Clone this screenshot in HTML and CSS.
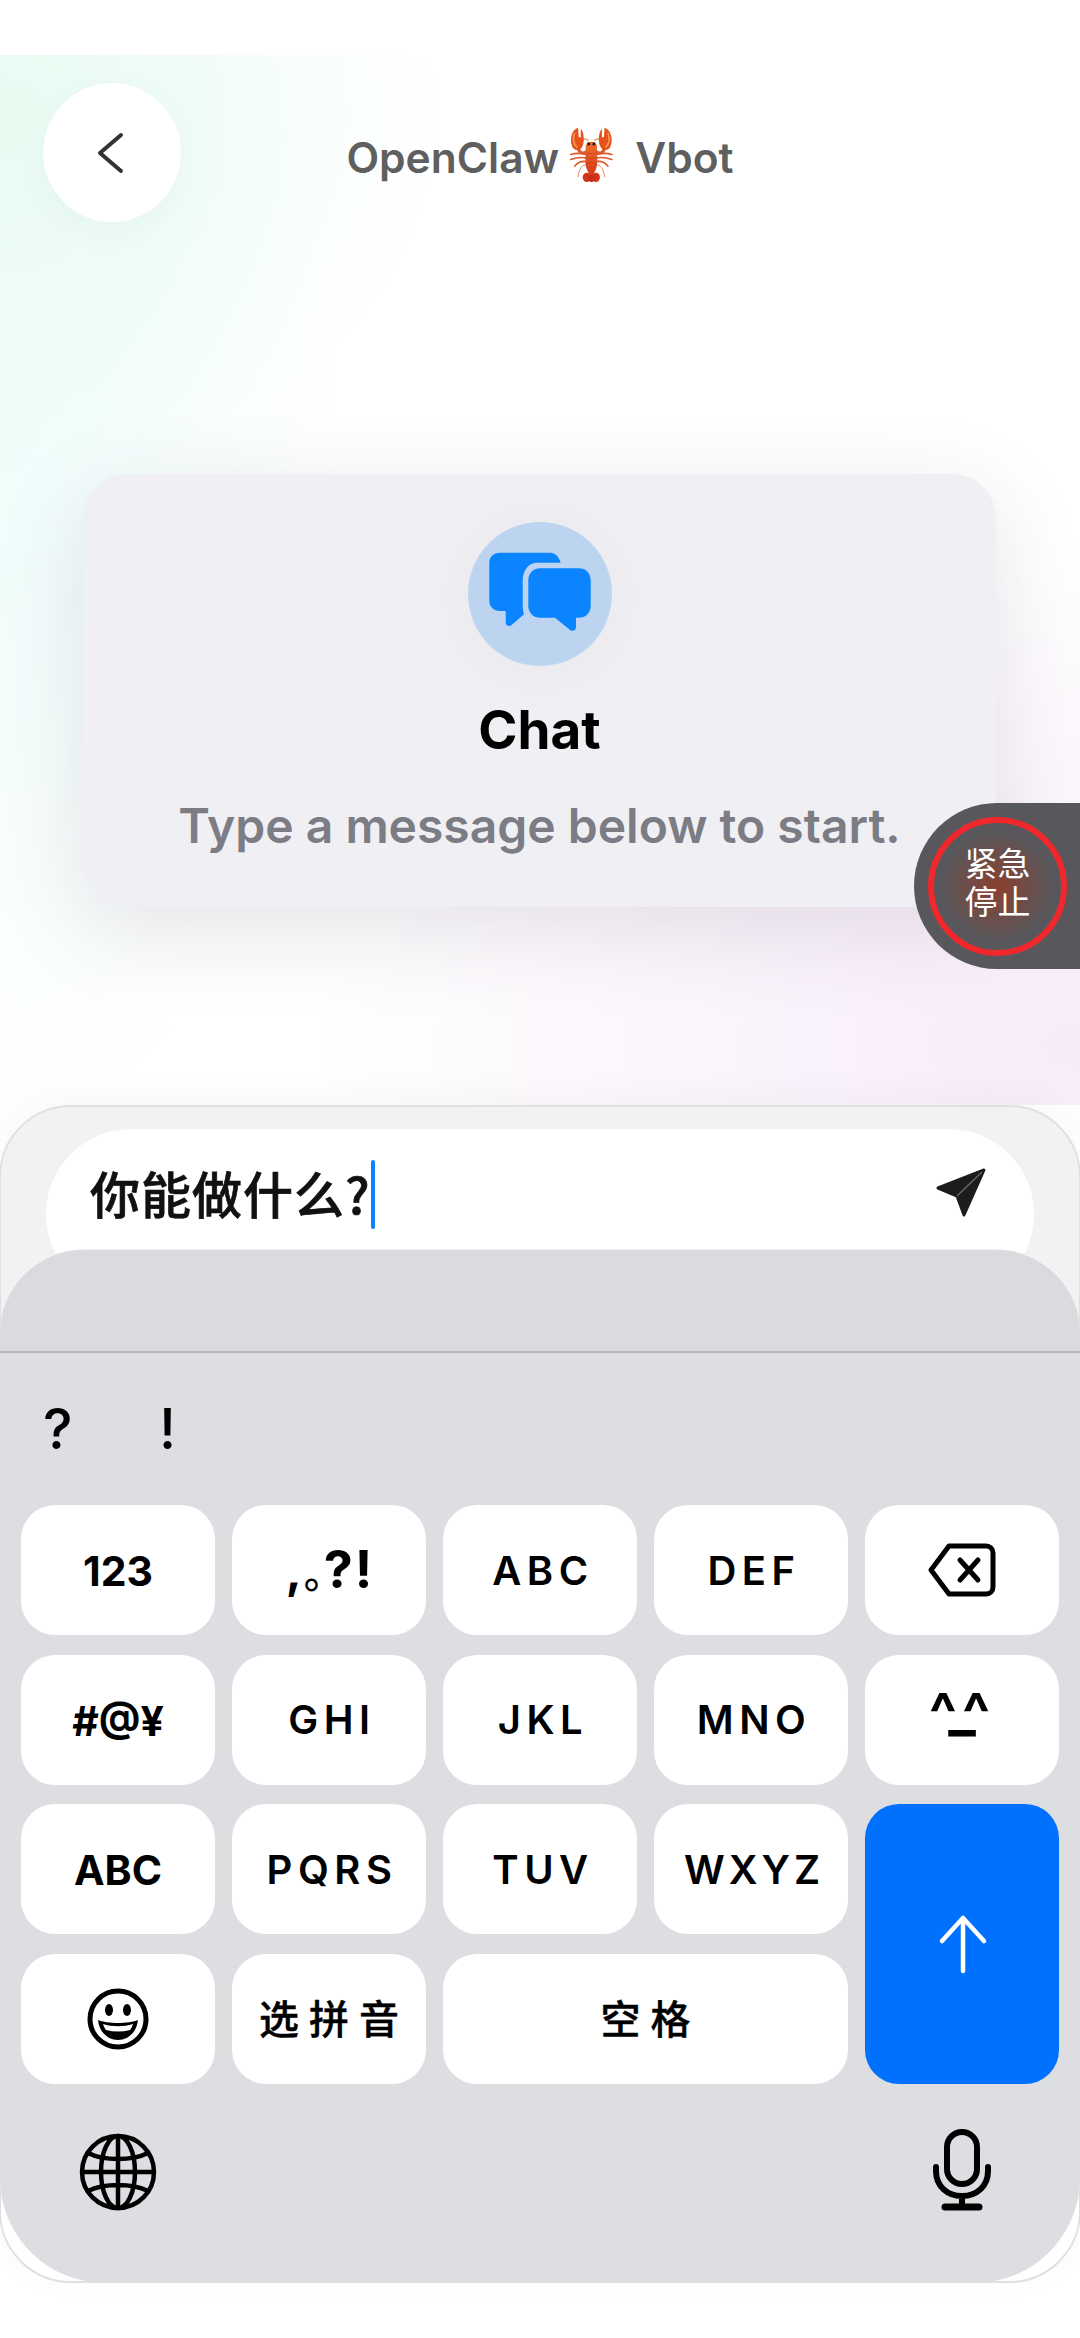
FILE: index.html
```html
<!doctype html>
<html lang="zh">
<head>
    <meta charset="UTF-8">
    <meta name="viewport" content="width=device-width, initial-scale=1.0">
    <title>OpenClaw Vbot</title>
    <link rel="stylesheet" href="styles.css">
</head>
<body>
<div class="screen">
    <div class="chat">
        <div class="header">
            <div class="back">
                <svg width="32" height="44" viewBox="0 0 32 44"><path d="M27 4 L6 22 L27 40" fill="none" stroke="#333" stroke-width="4" stroke-linecap="round" stroke-linejoin="round"/></svg>
            </div>
            <div class="title">
                <span>OpenClaw</span>
                <svg class="lobster" width="45" height="55" viewBox="205 92 135 166">
                    <defs>
                        <linearGradient id="shell" x1="0" y1="0" x2="0" y2="1">
                            <stop offset="0" stop-color="#f0702c"/>
                            <stop offset="1" stop-color="#d63a18"/>
                        </linearGradient>
                    </defs>
                    <g id="half" fill="none" stroke="#dc5a2a" stroke-linecap="round">
                        <path d="M232 155 C236 172 248 176 262 162" stroke-width="9"/>
                        <path d="M262 132 C252 124 246 128 242 138" stroke-width="4" stroke="#e88a62"/>
                        <path d="M258 176 C240 170 226 170 210 175" stroke-width="5"/>
                        <path d="M258 186 C240 182 226 184 210 190" stroke-width="5"/>
                        <path d="M258 196 C242 194 230 198 222 210" stroke-width="5"/>
                        <path d="M258 206 C244 206 236 214 232 242" stroke-width="3" stroke="#e88a62"/>
                        <path d="M232 94 C214 98 205 128 214 150 C220 166 240 166 247 146 C252 128 248 104 240 98 L240 124 L234 122 Z" fill="#e5521c" stroke="none"/>
                        <path d="M221 112 C215 126 218 144 228 152" stroke="#f79a50" stroke-width="5"/>
                    </g>
                    <use href="#half" transform="matrix(-1 0 0 1 544 0)"/>
                    <ellipse cx="258" cy="244" rx="12" ry="14" fill="#d4351a"/>
                    <ellipse cx="286" cy="244" rx="12" ry="14" fill="#d4351a"/>
                    <ellipse cx="272" cy="245" rx="12" ry="13" fill="#c92f16"/>
                    <path d="M255 150 C260 132 284 132 289 150 L290 195 C290 212 282 235 272 238 C262 235 254 212 254 195 Z" fill="url(#shell)"/>
                    <path d="M256 172 H288 M256 186 H288 M257 200 H287 M260 214 H284" stroke="#c43c18" stroke-width="2" fill="none"/>
                    <circle cx="264" cy="143" r="5" fill="#3a1a12"/>
                    <circle cx="280" cy="143" r="5" fill="#3a1a12"/>
                </svg>
                <span class="bot">Vbot</span>
            </div>
        </div>
        <div class="card">
            <svg class="card-icon" width="144" height="144" viewBox="0 0 144 144">
                <circle cx="72" cy="72" r="72" fill="#bcd4ef"/>
                <path d="M32 30.7 H82 C87.500 30.700 91 35 92.700 40.700 H68.700 C60 40.700 54.700 49 54.700 59 V82.300 C54.700 86 55 89.500 56 92.300 L43.700 103 C41 105 37.700 103.500 37.700 100.700 V89 H32 C25.500 89 21.300 84.500 21.300 79 V40.700 C21.300 35 25.500 30.700 32 30.700 Z" fill="#0a84ff"/>
                <path d="M72.300 46.300 H110.700 C117.500 46.300 122.700 51 122.700 58.300 V83.700 C122.700 91 117.500 95.700 110.700 95.700 H108 V105 C108 108.300 104.800 110 102 108 L87 95.700 H72.300 C65.500 95.700 60.300 91 60.300 83.700 V58.300 C60.300 51 65.500 46.300 72.300 46.300 Z" fill="#0a84ff"/>
            </svg>
            <div class="card-title">Chat</div>
            <div class="card-text">Type a message below to start.</div>
        </div>
        <div class="estop">
            <div class="estop-ring">紧急<br>停止</div>
        </div>
    </div>

    <div class="composer">
        <div class="input">
            <span class="input-text">你能做什么?</span><span class="caret"></span>
            <svg class="send" width="52" height="50" viewBox="0 0 52 50">
                <path d="M49 2 L3 20 L22 28 L29 47 Z" fill="#1c1c1c" stroke="#1c1c1c" stroke-width="3" stroke-linejoin="round"/>
                <path d="M47 4 L22 28" stroke="#666" stroke-width="1.500"/>
            </svg>
        </div>
        <div class="keyboard">
            <div class="kb-top"></div>
            <div class="punct"><span>?</span><span>!</span></div>
            <div class="keys">
                <div class="key num">123</div>
                <div class="key mixed"><span class="mixed-comma">,</span><span class="mixed-dot">。</span><span class="mixed-big">?!</span></div>
                <div class="key wide">ABC</div>
                <div class="key wide">DEF</div>
                <div class="key">
                    <svg width="68" height="54" viewBox="0 0 68 54">
                        <path d="M21 3 H58 C62 3 65 6 65 10 V44 C65 48 62 51 58 51 H21 L3 27 Z" fill="none" stroke="#000" stroke-width="5" stroke-linejoin="round"/>
                        <path d="M32 17 L50 37 M50 17 L32 37" stroke="#000" stroke-width="5" stroke-linecap="round"/>
                    </svg>
                </div>

                <div class="key num">#@¥</div>
                <div class="key wide">GHI</div>
                <div class="key wide">JKL</div>
                <div class="key wide">MNO</div>
                <div class="key kao"><span class="kao-eyes">^^</span><span class="kao-mouth">_</span></div>

                <div class="key num">ABC</div>
                <div class="key wide">PQRS</div>
                <div class="key wide">TUV</div>
                <div class="key wide tight">WXYZ</div>
                <div class="key enter">
                    <svg width="50" height="60" viewBox="0 0 50 60">
                        <path d="M25 57 V4 M4 27 L25 4 L46 27" fill="none" stroke="#fff" stroke-width="4.500" stroke-linecap="round" stroke-linejoin="round"/>
                    </svg>
                </div>

                <div class="key">
                    <svg width="62" height="62" viewBox="0 0 62 62">
                        <circle cx="31" cy="31" r="28" fill="none" stroke="#000" stroke-width="5"/>
                        <ellipse cx="22" cy="22" rx="4" ry="6"/>
                        <ellipse cx="40" cy="22" rx="4" ry="6"/>
                        <path d="M11 32 C20 36 42 36 51 32 C50 44 41 52 31 52 C21 52 12 44 11 32 Z"/>
                        <path d="M16 36 C25 39 37 39 46 36 C45 39 44 41 43 42 C35 44 27 44 19 42 C18 41 17 39 16 36 Z" fill="#fff"/>
                    </svg>
                </div>
                <div class="key cjk">选拼音</div>
                <div class="key cjk space">空格</div>
            </div>
            <div class="kb-bottom">
                <svg width="78" height="78" viewBox="0 0 78 78" fill="none" stroke="#000" stroke-width="4.500">
                    <circle cx="39" cy="39" r="36"/>
                    <ellipse cx="39" cy="39" rx="17" ry="36"/>
                    <path d="M39 3 V75 M3 39 H75 M9 20 C25 28 53 28 69 20 M9 58 C25 50 53 50 69 58"/>
                </svg>
                <svg width="58" height="82" viewBox="0 0 58 82" fill="none" stroke="#000" stroke-width="6" stroke-linecap="round">
                    <rect x="14" y="3" width="30" height="52" rx="15"/>
                    <path d="M3 38 V42 C3 57 14 67 29 67 C44 67 55 57 55 42 V38 M29 67 V78"/>
                    <path d="M12 78 H46" stroke-width="7"/>
                </svg>
            </div>
        </div>
    </div>
</div>
</body>
</html>
```
FILE: styles.css
```css
*{margin: 0;padding: 0;box-sizing: border-box}
html,body{width: 1080px;height: 2338px;background: #fff;overflow: hidden}
body{font-family: Inter, "Noto Sans CJK SC", sans-serif;color: #000}

.screen{width: 1080px;height: 2338px;padding-top: 55px;display: flex;flex-direction: column;background: #fff}

/* chat area */
.chat{
    position: relative;
    height: 1050px;
    padding: 28px 0 0;
    background:
        radial-gradient(440px 360px at 0 60px, #e7fbf1 0, rgba(231,251,241,0) 100%),
        radial-gradient(340px 640px at 0 420px, #effdfb 0, rgba(239,253,251,0) 100%),
        radial-gradient(760px 480px at 1080px 990px, #f7ebfa 0, rgba(247,235,250,0) 100%),
        #fff;
}
.header{display: grid;grid-template-columns: 1fr auto 1fr;align-items: center;padding: 0 43px}
.back{
    width: 138px;height: 139px;border-radius: 50%;background: #fff;
    display: flex;align-items: center;justify-content: center;
    box-shadow: 0 10px 40px rgba(0,0,0,.03);
}
.back svg{margin-right: 4px}
.title{display: flex;align-items: center;font-size: 42.5px;font-weight: 600;color: #5f5f5f;margin-top: 10px;line-height: 56px}
.lobster{margin: -6px 21px 0 10px}

.card{
    width: 913px;height: 433px;margin: 252px 0 0 83px;padding-top: 48px;
    display: flex;flex-direction: column;align-items: center;
    background: #efeff4;border-radius: 44px;
    box-shadow: 0 24px 90px rgba(60,50,70,.13);
}
.card-icon{filter: drop-shadow(0 4px 30px rgba(0,0,0,.03))}
.card-title{font-size: 53px;font-weight: 700;line-height: 60px;margin-top: 34px}
.card-text{font-size: 48px;font-weight: 600;line-height: 58px;color: #7c7c84;margin-top: 37px;white-space: nowrap}

.estop{
    position: absolute;right: 0;top: 748px;
    width: 166px;height: 166px;padding-left: 14px;
    display: flex;align-items: center;
    background: #58585c;border-radius: 83px 0 0 83px;
}
.estop-ring{
    width: 139px;height: 139px;border-radius: 50%;border: 6px solid #f0282c;padding-bottom: 10px;
    display: flex;align-items: center;justify-content: center;text-align: center;
    background: radial-gradient(circle, #8a4030 0, rgba(138,64,48,0) 62%);
    color: #fff;font-size: 33px;line-height: 38px;font-family: "Noto Sans CJK SC", sans-serif;
}

/* input + keyboard */
.composer{
    height: 1178px;padding-top: 22px;
    background: linear-gradient(#f2f2f2 0, #f2f2f2 1000px, #fff 1001px);
    border: 2px solid #e0e0e0;border-radius: 72px;
    margin: 0 -1px;
    box-shadow: 0 -8px 40px rgba(0,0,0,.035);
    position: relative;
}
.input{
    width: 988px;height: 170px;margin-left: 45px;padding: 0 44px;
    display: flex;align-items: flex-start;
    background: #fff;border-radius: 85px;
}
.input-text{font-size: 50px;font-weight: 500;-webkit-text-stroke: .7px #111;letter-spacing: 1px;line-height: 60px;margin-top: 33px;color: #111;font-family: "Noto Sans CJK SC", sans-serif}
.caret{width: 4px;height: 69px;border-radius: 2px;background: #0a84ff;margin-top: 31px}
.send{margin: 39px 0 0 auto;margin-right: 3px}

.keyboard{
    position: relative;margin: -49px 0 0 -1px;width: 1080px;height: 1033px;
    background: #dddee2;border-radius: 84px 84px 105px 105px;
    box-shadow: 0 -1px 0 #f4f4f6;
}
.kb-top{height: 103px;border-bottom: 2px solid #b5b5ba;background: #dadbdf;border-radius: 84px 84px 0 0}
.punct{height: 152px;padding: 42px 0 0 43px;display: flex;font-size: 56px;font-weight: 500;line-height: 68px}
.punct span:first-child{width: 116px}

.keys{
    display: grid;grid-template-columns: repeat(5, 194px);grid-auto-rows: 130px;
    gap: 19.5px 17px;padding: 0 21px;
}
.key{
    background: #fff;border-radius: 34px;
    display: flex;align-items: center;justify-content: center;
    font-size: 40px;font-weight: 700;
}
.num{font-size: 41px;padding-top: 2px}
.wide{letter-spacing: 5.500px;padding-left: 6px;font-weight: 600}
.tight{letter-spacing: 4px}
.mixed{align-items: baseline;line-height: 130px;padding-left: 2px}
.mixed-comma{font-size: 48px;width: 18px}
.mixed-dot{font-size: 40px;width: 20px;font-weight: 500;font-family: "Noto Sans CJK SC", sans-serif;overflow: visible}
.mixed-big{font-size: 52px;font-weight: 700;letter-spacing: 2px}
.cjk{font-family: "Noto Sans CJK SC", sans-serif;font-weight: 500;-webkit-text-stroke: .4px #000;letter-spacing: 10px;padding: 0 0 3px 10px}
.space{grid-column: span 2}
.enter{grid-column: 5;grid-row: 3 / span 2;background: #0070ff;padding-left: 1px}
.kao{flex-direction: column;justify-content: flex-start;font-size: 58px;line-height: 30px}
.kao-eyes{height: 30px;margin-top: 43px;letter-spacing: 5px}
.kao-mouth{height: 30px;margin-top: -34px}

.kb-bottom{display: flex;justify-content: space-between;align-items: flex-end;height: 127px;padding: 0 89px 0 79px}
```
